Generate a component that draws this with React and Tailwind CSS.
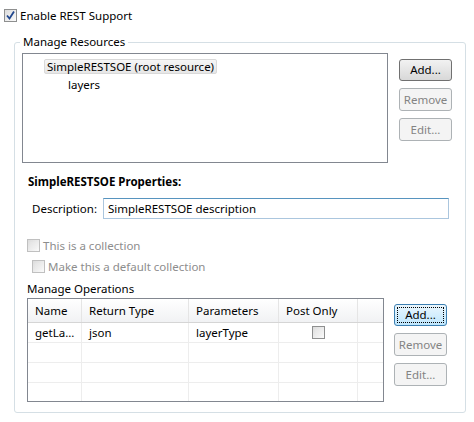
import React from 'react'

const font = { fontFamily: '"Noto Sans", "Open Sans", sans-serif' }

function Btn({ label, kind }) {
  if (kind === 'default')
    return (
      <div className="w-[53px] h-[22px] rounded-[3px] border border-[#707070] bg-gradient-to-b from-[#f2f2f2] to-[#d8d8d8] flex items-center justify-center text-black">
        {label}
      </div>
    )
  if (kind === 'focus')
    return (
      <div className="w-[53px] h-[22px] rounded-[3px] border border-[#3c7fb1] bg-gradient-to-b from-[#eaf6fd] to-[#bee6fd] p-[2px]">
        <div className="w-full h-full border border-dotted border-black flex items-center justify-center text-black">
          {label}
        </div>
      </div>
    )
  return (
    <div className="w-[53px] h-[23px] rounded-[3px] border border-[#adb2b5] bg-[#f4f4f4] flex items-center justify-center text-[#838383]">
      {label}
    </div>
  )
}

function Check({ disabled }) {
  return (
    <div className={`w-[13px] h-[13px] border ${disabled ? 'border-[#c0c0c0]' : 'border-[#8e8f8f]'} bg-gradient-to-br from-[#dcdcdc] to-[#fbfbfb] p-[2px]`}>
      <div className="w-full h-full bg-gradient-to-br from-[#e4e4e4] to-[#f4f4f4]" />
    </div>
  )
}

export default function App() {
  const cols = [
    { w: 'w-[54px]', t: 'Name' },
    { w: 'w-[107px]', t: 'Return Type' },
    { w: 'w-[90px]', t: 'Parameters' },
    { w: 'w-[79px]', t: 'Post Only' },
  ]
  return (
    <div className="w-[474px] h-[422px] bg-white text-[11.5px] text-black overflow-hidden" style={font}>
      {/* enable checkbox */}
      <div className="flex items-center pt-[5px] pl-[4px] h-[25px]">
        <div className="w-[13px] h-[13px] border border-[#8e8f8f] bg-gradient-to-br from-[#dcdcdc] to-[#fbfbfb] flex items-center justify-center">
          <svg width="11" height="11" viewBox="0 0 11 11">
            <path d="M2 5.5 L4.5 8.5 L9 1.5" stroke="#21478e" strokeWidth="1.8" fill="none" />
          </svg>
        </div>
        <span className="ml-[3px] leading-[15px]">Enable REST Support</span>
      </div>

      {/* group */}
      <div className="relative ml-[14px] mt-[17px] w-[452px] h-[371px] border border-[#d5dfe5] rounded-[3px]">
        <span className="absolute left-[5px] top-[-9px] bg-white px-[3px] leading-[15px]">Manage Resources</span>

        <div className="flex pl-[7px] pt-[10px]">
          <div className="w-[366px] h-[110px] border border-[#828790] pt-[4px] pl-[21px]">
            <div className="inline-block h-[15px] leading-[13px] px-[2px] rounded-[2px] border border-[#d9d9d9] bg-gradient-to-b from-[#f6f6f6] to-[#e6e6e6]">
              SimpleRESTSOE (root resource)
            </div>
            <div className="pl-[24px] mt-[2px] leading-[15px]">layers</div>
          </div>
          <div className="ml-[11px] pt-[6px] flex flex-col gap-[7px]">
            <Btn label="Add..." kind="default" />
            <Btn label="Remove" />
            <Btn label="Edit..." />
          </div>
        </div>

        <div className="pl-[13px] mt-[11px] font-bold leading-[15px]">SimpleRESTSOE Properties:</div>

        <div className="flex items-center pl-[17px] mt-[9px]">
          <span className="w-[71px] leading-[15px]">Description:</span>
          <div className="w-[346px] h-[21px] border border-[#abc6de] border-t-[#5794bf] flex items-center pl-[4px]">
            SimpleRESTSOE description
          </div>
        </div>

        <div className="flex items-center pl-[12px] mt-[19px] text-[#8d8d8d]">
          <Check disabled />
          <span className="ml-[3px] leading-[15px]">This is a collection</span>
        </div>
        <div className="flex items-center pl-[17px] mt-[6px] text-[#8d8d8d]">
          <Check disabled />
          <span className="ml-[3px] leading-[15px]">Make this a default collection</span>
        </div>

        <div className="pl-[12px] mt-[7px] leading-[15px]">Manage Operations</div>

        <div className="flex pl-[12px] mt-[2px]">
          <div className="w-[357px] h-[104px] border border-[#828790] overflow-hidden">
            <div className="flex h-[24px] bg-gradient-to-b from-[#ffffff] to-[#f1f2f4] border-b border-[#d5d5d5]">
              {cols.map((c) => (
                <div key={c.t} className={`${c.w} h-full border-r border-[#e5e5e5] flex items-center pl-[7px]`}>
                  {c.t}
                </div>
              ))}
              <div className="flex-1" />
            </div>
            {[0, 1, 2, 3].map((r) => (
              <div key={r} className="flex h-[20px] border-b border-[#ededed]">
                {cols.map((c, i) => (
                  <div key={c.t} className={`${c.w} h-full border-r border-[#ededed] flex items-center ${i === 3 ? 'justify-center' : 'pl-[7px]'}`}>
                    {r === 0 && i === 0 && 'getLa...'}
                    {r === 0 && i === 1 && 'json'}
                    {r === 0 && i === 2 && 'layerType'}
                    {r === 0 && i === 3 && <Check />}
                  </div>
                ))}
                <div className="flex-1" />
              </div>
            ))}
          </div>
          <div className="ml-[10px] pt-[6px] flex flex-col gap-[7px]">
            <Btn label="Add..." kind="focus" />
            <Btn label="Remove" />
            <Btn label="Edit..." />
          </div>
        </div>
      </div>
    </div>
  )
}
